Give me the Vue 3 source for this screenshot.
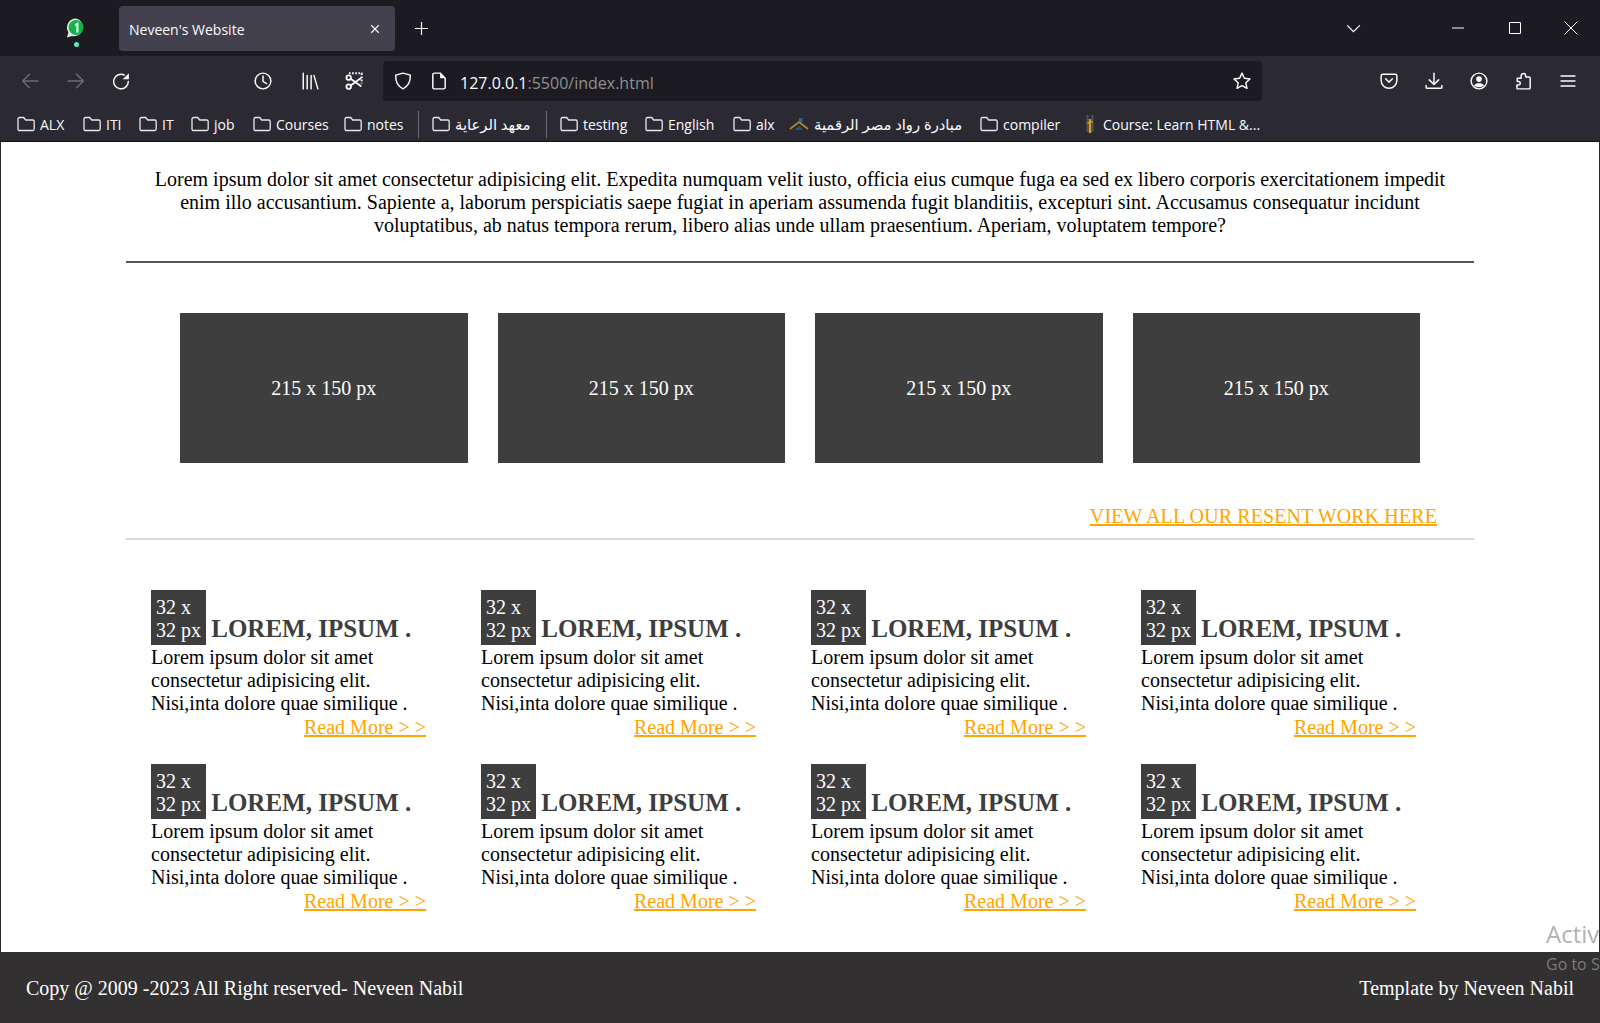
<script setup>
const bookmarks = [
  { label: 'ALX', width: 66 },
  { label: 'ITI', width: 56 },
  { label: 'IT', width: 52 },
  { label: 'job', width: 62 },
  { label: 'Courses', width: 91 },
  { label: 'notes', width: 74, sep: true },
  { label: 'معهد الرعاية', width: 114, sep: true, rtl: true },
  { label: 'testing', width: 85 },
  { label: 'English', width: 88 },
  { label: 'alx', width: 56 },
  { label: 'مبادرة رواد مصر الرقمية', width: 191, kind: 'flag', rtl: true },
  { label: 'compiler', width: 106 },
  { label: 'Course: Learn HTML &...', width: 190, kind: 'course' }
]

const works = [1, 2, 3, 4]
const posts = [1, 2, 3, 4, 5, 6, 7, 8]
</script>

<template>
  <div class="screen">
    <header class="titlebar">
      <div class="pinned">
        <svg class="whatsapp" viewBox="0 0 20 20">
          <path d="M10 0.5a9 9 0 0 0-7.6 13.8L1 19.5l5.2-1.400A9 9 0 1 0 10 0.500z" fill="#e4ebe4" />
          <circle cx="10" cy="9.500" r="7.500" fill="#12b347" />
          <path d="M9.400 5.800l2-1.300h1v10h-2V7.200l-1.700 0.900z" fill="#fff" />
        </svg>
        <span class="pinned-dot"></span>
      </div>
      <div class="tab">
        <span class="tab-title">Neveen's Website</span>
        <svg class="tab-close" viewBox="0 0 12 12"><path d="M1.500 1.500l9 9M10.500 1.500l-9 9" /></svg>
      </div>
      <svg class="new-tab" viewBox="0 0 16 16"><path d="M8 1v14M1 8h14" /></svg>
      <svg class="tab-list" viewBox="0 0 16 10"><path d="M1 1.500l7 7 7-7" /></svg>
      <svg class="win-btn win-min" viewBox="0 0 12 12"><path d="M0 6h12" /></svg>
      <svg class="win-btn win-max" viewBox="0 0 12 12"><path d="M0.500 0.500h11v11H0.500z" /></svg>
      <svg class="win-btn win-close" viewBox="0 0 14 14"><path d="M0.500 0.500l13 13M13.500 0.500l-13 13" /></svg>
    </header>

    <div class="toolbar">
      <svg class="tool back dim" viewBox="0 0 16 16"><path d="M15 8H1.500M7.500 2l-6 6 6 6" /></svg>
      <svg class="tool forward dim" viewBox="0 0 16 16"><path d="M1 8h13.500M8.500 2l6 6-6 6" /></svg>
      <svg class="tool reload" viewBox="0 0 16 16">
        <path d="M14.500 8.500A6.500 6.500 0 1 1 11 2.700" />
        <path d="M15 1v5.500H9.500z" class="solid" />
      </svg>
      <svg class="tool history" viewBox="0 0 16 16"><circle cx="8" cy="8" r="7" /><path d="M8 3.500V8.300l3.200 2" /></svg>
      <svg class="tool library" viewBox="0 0 16 16"><path d="M2 1v14M5.500 3v12M9 3v12M11.500 3l3.500 12" /></svg>
      <svg class="tool snip" viewBox="0 0 16 16">
        <path d="M3.500 1.200h11.300v9" stroke-dasharray="1.500 1.300" stroke-width="1.800" stroke-linecap="butt" />
        <circle cx="3.300" cy="5" r="2" stroke-width="1.600" />
        <circle cx="3.300" cy="13" r="2" stroke-width="1.600" />
        <path d="M5 6l9 6.500M5 12l9-6.500" stroke-width="1.600" />
      </svg>
      <div class="urlbar">
        <svg class="tool shield" viewBox="0 0 16 16"><path d="M8 1l6.500 1.800c0.200 5.700-1.500 9.700-6.500 12.200C3 12.500 1.300 8.500 1.500 2.800z" /></svg>
        <svg class="tool page-icon" viewBox="0 0 16 16">
          <path d="M2.500 2.500a1.500 1.500 0 0 1 1.500-1.500h5l4.500 4.500v8a1.500 1.500 0 0 1-1.500 1.500H4a1.500 1.500 0 0 1-1.500-1.500z" />
          <path d="M9 1v4.500h4.500z" class="solid" />
        </svg>
        <span class="url"><span class="url-host">127.0.0.1</span>:5500/index.html</span>
        <svg class="tool star" viewBox="0 0 16 16"><path d="M8 1l2.100 4.600 5 0.600-3.700 3.400 1 4.900L8 12.100l-4.400 2.400 1-4.900L0.900 6.200l5-0.600z" /></svg>
      </div>
      <svg class="tool pocket" viewBox="0 0 16 16">
        <path d="M1 3.500A1.500 1.500 0 0 1 2.500 2h11A1.500 1.500 0 0 1 15 3.500V7.500a7 7 0 0 1-14 0z" />
        <path d="M5 6l3 3 3-3" />
      </svg>
      <svg class="tool download" viewBox="0 0 16 16"><path d="M8 1v10M3.800 7L8 11.200 12.200 7M1 12v1.500a1 1 0 0 0 1 1h12a1 1 0 0 0 1-1V12" /></svg>
      <svg class="tool account" viewBox="0 0 16 16">
        <circle cx="8" cy="8" r="7" />
        <circle cx="8" cy="6.300" r="2.500" class="solid" />
        <path d="M3.500 12c1-1.600 2.500-2 4.500-2s3.500 0.400 4.500 2c-2.500 2-6.500 2-9 0z" class="solid" />
      </svg>
      <svg class="tool extension" viewBox="0 0 16 16">
        <path d="M2 5.500h3.500V3.300a2 2 0 1 1 4 0V4.500h3a1 1 0 0 1 1 1V14a1 1 0 0 1-1 1H2.500a0.800 0.800 0 0 1-0.800-0.800V11.500h1.500a1.500 1.500 0 0 0 0-3H2z" />
      </svg>
      <svg class="tool menu" viewBox="0 0 16 16"><path d="M1 3h14M1 8h14M1 13h14" /></svg>
    </div>

    <nav class="bookmarks">
      <template v-for="b in bookmarks" :key="b.label">
        <div class="bookmark" :style="{ width: b.width + 'px' }">
          <svg v-if="b.kind === 'flag'" class="bm-icon" viewBox="0 0 20 14">
            <path d="M1 12l9-7 9 7" fill="none" stroke="#a8902f" stroke-width="1.600" />
            <path d="M6 13l4-4 4 4z" fill="#1d5a86" />
            <path d="M10 1h4l-1.500 2 1.500 2h-4z" fill="#1d6fa8" />
          </svg>
          <svg v-else-if="b.kind === 'course'" class="bm-course" viewBox="0 0 8 20">
            <path d="M1.500 1v17M6.500 1v17" stroke="#54544f" stroke-width="2" />
            <path d="M4 5v14" stroke="#dc9a28" stroke-width="2.400" />
            <path d="M1.500 9l5-1.500" stroke="#dc9a28" stroke-width="1.400" />
          </svg>
          <svg v-else class="bm-folder" viewBox="0 0 18 16">
            <path d="M1 3a1.500 1.500 0 0 1 1.500-1.500h4.200l2 2.500h7a1.500 1.500 0 0 1 1.500 1.500v7.500a1.500 1.500 0 0 1-1.500 1.500h-13A1.500 1.500 0 0 1 1 13z" />
          </svg>
          <span :class="{ 'bm-arabic': b.rtl }">{{ b.label }}</span>
        </div>
        <span v-if="b.sep" class="bm-sep"></span>
      </template>
    </nav>

    <main class="page">
      <div class="container">
        <p class="intro">
          Lorem ipsum dolor sit amet consectetur adipisicing elit. Expedita numquam velit iusto, officia eius cumque fuga ea sed ex libero corporis exercitationem impedit enim illo accusantium. Sapiente a, laborum perspiciatis saepe fugiat in aperiam assumenda fugit blanditiis, excepturi sint. Accusamus consequatur incidunt voluptatibus, ab natus tempora rerum, libero alias unde ullam praesentium. Aperiam, voluptatem tempore?
        </p>
        <hr class="rule-dark" />

        <section class="works">
          <div v-for="w in works" :key="w" class="work">215 x 150 px</div>
        </section>

        <div class="all-work"><a href="#">VIEW ALL OUR RESENT WORK HERE</a></div>
        <hr class="rule-light" />

        <section class="posts">
          <article v-for="p in posts" :key="p" class="post">
            <h3><span class="thumb">32 x 32 px</span> LOREM, IPSUM .</h3>
            <p>Lorem ipsum dolor sit amet consectetur adipisicing elit. Nisi,inta dolore quae similique .</p>
            <a href="#" class="more">Read More &gt; &gt;</a>
          </article>
        </section>
      </div>
    </main>

    <footer class="footer">
      <span>Copy @ 2009 -2023 All Right reserved- Neveen Nabil</span>
      <span>Template by Neveen Nabil</span>
    </footer>

    <div class="activation">
      <div class="act-title">Activate Windows</div>
      <div class="act-sub">Go to Settings to activate Windows.</div>
    </div>
  </div>
</template>

<style>
html, body { margin: 0; background: #fff; overflow: hidden; }
</style>

<style scoped>
.screen {
  position: relative;
  width: 1600px;
  height: 1023px;
  display: flex;
  flex-direction: column;
  overflow: hidden;
  background: #fff;
  font-family: "Liberation Serif", serif;
}

/* browser chrome */
.titlebar {
  height: 56px;
  background: #1c1b22;
  display: flex;
  align-items: center;
  color: #fbfbfe;
  font-family: "Open Sans", "DejaVu Sans", sans-serif;
  flex: none;
}
.pinned {
  width: 119px;
  height: 44px;
  position: relative;
  flex: none;
}
.whatsapp {
  position: absolute;
  left: 66px;
  top: 12px;
  width: 20px;
  height: 20px;
}
.pinned-dot {
  position: absolute;
  left: 74px;
  top: 36px;
  width: 5px;
  height: 5px;
  border-radius: 50%;
  background: #54f0b8;
}
.tab {
  width: 276px;
  height: 45px;
  margin-top: 1px;
  background: #42414d;
  border-radius: 4px;
  display: flex;
  align-items: center;
  padding: 0 15px 0 10px;
  box-sizing: border-box;
  flex: none;
}
.tab-title { font-size: 14px; flex: 1; padding-top: 2px; }
.tab-close { width: 10px; height: 10px; fill: none; stroke: #fbfbfe; stroke-width: 1.3; }
.new-tab {
  width: 15px;
  height: 15px;
  margin-left: 19px;
  fill: none;
  stroke: #fbfbfe;
  stroke-width: 1.3;
}
.tab-list {
  width: 15px;
  height: 9px;
  margin-left: 917px;
  fill: none;
  stroke: #fbfbfe;
  stroke-width: 1.4;
}
.win-btn { fill: none; stroke: #fbfbfe; stroke-width: 1; height: 12px; width: 12px; }
.win-min { margin-left: 91px; }
.win-max { margin-left: 45px; }
.win-close { margin-left: 43px; width: 14px; height: 14px; }

.toolbar {
  height: 45px;
  flex: none;
  box-sizing: border-box;
  background: #2b2a33;
  padding: 5px 0 0 21px;
  display: flex;
  align-items: center;
  font-family: "Open Sans", "DejaVu Sans", sans-serif;
  color: #fbfbfe;
}
.tool {
  width: 18px;
  height: 18px;
  flex: none;
  fill: none;
  stroke: currentColor;
  stroke-width: 1.3;
  stroke-linecap: round;
  stroke-linejoin: round;
}
.tool .solid { fill: currentColor; stroke: none; }
.tool.dim { color: #6d6c74; }
.forward { margin-left: 28px; }
.reload { margin-left: 27px; }
.history { margin-left: 124px; }
.library { margin-left: 29px; }
.snip { margin-left: 26px; }
.urlbar {
  width: 879px;
  height: 40px;
  margin-left: 20px;
  box-sizing: border-box;
  padding: 0 11px 0 11px;
  background: #1c1b22;
  border-radius: 4px;
  display: flex;
  align-items: center;
  flex: none;
}
.page-icon { margin-left: 18px; }
.url {
  margin-left: 12px;
  padding-top: 3px;
  font-size: 16px;
  color: #8f8f94;
  flex: 1;
}
.url-host { color: #fbfbfe; }
.pocket { margin-left: 118px; }
.download { margin-left: 27px; }
.account { margin-left: 27px; }
.extension { margin-left: 27px; }
.menu { margin-left: 27px; width: 16px; }

.bookmarks {
  height: 41px;
  flex: none;
  box-sizing: border-box;
  background: #2b2a33;
  border-bottom: 1px solid #111;
  padding: 6px 0 0 17px;
  display: flex;
  align-items: center;
  color: #fbfbfe;
  font-family: "Open Sans", "DejaVu Sans", sans-serif;
  font-size: 14px;
}
.bookmark {
  display: flex;
  align-items: center;
  gap: 5px;
  flex: none;
  white-space: nowrap;
}
.bookmark svg { flex: none; }
.bm-folder {
  width: 18px;
  height: 16px;
  fill: none;
  stroke: #e8e8ea;
  stroke-width: 1.3;
}
.bm-arabic { font-size: 14.75px; }
.bm-icon { width: 20px; height: 14px; }
.bm-course { width: 8px; height: 20px; margin-right: 4px; }
.bm-sep {
  width: 1px;
  height: 27px;
  background: #6b6a72;
  margin-right: 13px;
  flex: none;
}

/* page */
.page {
  flex: 1;
  background: #fff;
  border-left: 1px solid #2b2a33;
  border-right: 1px solid #2b2a33;
}
.container {
  width: 1348px;
  margin: 0 auto;
  padding-top: 26px;
}
.intro {
  margin: 0 auto;
  width: 1310px;
  text-align: center;
  font-size: 20px;
  line-height: 23px;
  color: #000;
}
hr { margin: 0; border: 0; height: 2px; }
.rule-dark { margin-top: 24px; background: #555; }
.rule-light { margin-top: 10px; background: #d8d8d8; }

.works {
  margin-top: 50px;
  padding: 0 54px;
  display: grid;
  grid-template-columns: repeat(4, 1fr);
  gap: 30px;
}
.work {
  height: 149px;
  padding-top: 1px;
  background: #3e3e3e;
  color: #fff;
  font-size: 20px;
  display: flex;
  align-items: center;
  justify-content: center;
}
.all-work {
  margin-top: 42px;
  padding-right: 37px;
  text-align: right;
  font-size: 20px;
  line-height: 23px;
  letter-spacing: 0.1px;
}
a { color: orange; }

.posts {
  margin-top: 50px;
  padding-left: 25px;
  display: grid;
  grid-template-columns: repeat(4, 275px);
  column-gap: 55px;
  row-gap: 25px;
}
.post {
  font-size: 20px;
  line-height: 23px;
  color: #000;
}
.post h3 {
  margin: 0;
  font-size: 25px;
  line-height: 23px;
  color: #3e3e3e;
}
.thumb {
  display: inline-block;
  width: 55px;
  height: 55px;
  margin-right: -1px;
  box-sizing: border-box;
  padding: 6px 5px 0;
  background: #3e3e3e;
  color: #fff;
  font-size: 20px;
  font-weight: 400;
}
.post p { margin: 1px 0 0; }
.more { display: block; width: fit-content; margin-left: auto; margin-top: 1px; }

.footer {
  height: 71px;
  flex: none;
  box-sizing: border-box;
  padding: 2px 26px 0;
  background: #323031;
  color: #fff;
  font-size: 20px;
  display: flex;
  align-items: center;
  justify-content: space-between;
}

/* windows watermark, laid over the page */
.activation {
  position: absolute;
  left: 1546px;
  top: 918px;
  white-space: nowrap;
  font-family: "Open Sans", "DejaVu Sans", sans-serif;
  color: rgba(150, 150, 150, 0.75);
}
.act-title { font-size: 24px; line-height: 32px; }
.act-sub { font-size: 16px; line-height: 24px; margin-top: 2px; }
</style>
